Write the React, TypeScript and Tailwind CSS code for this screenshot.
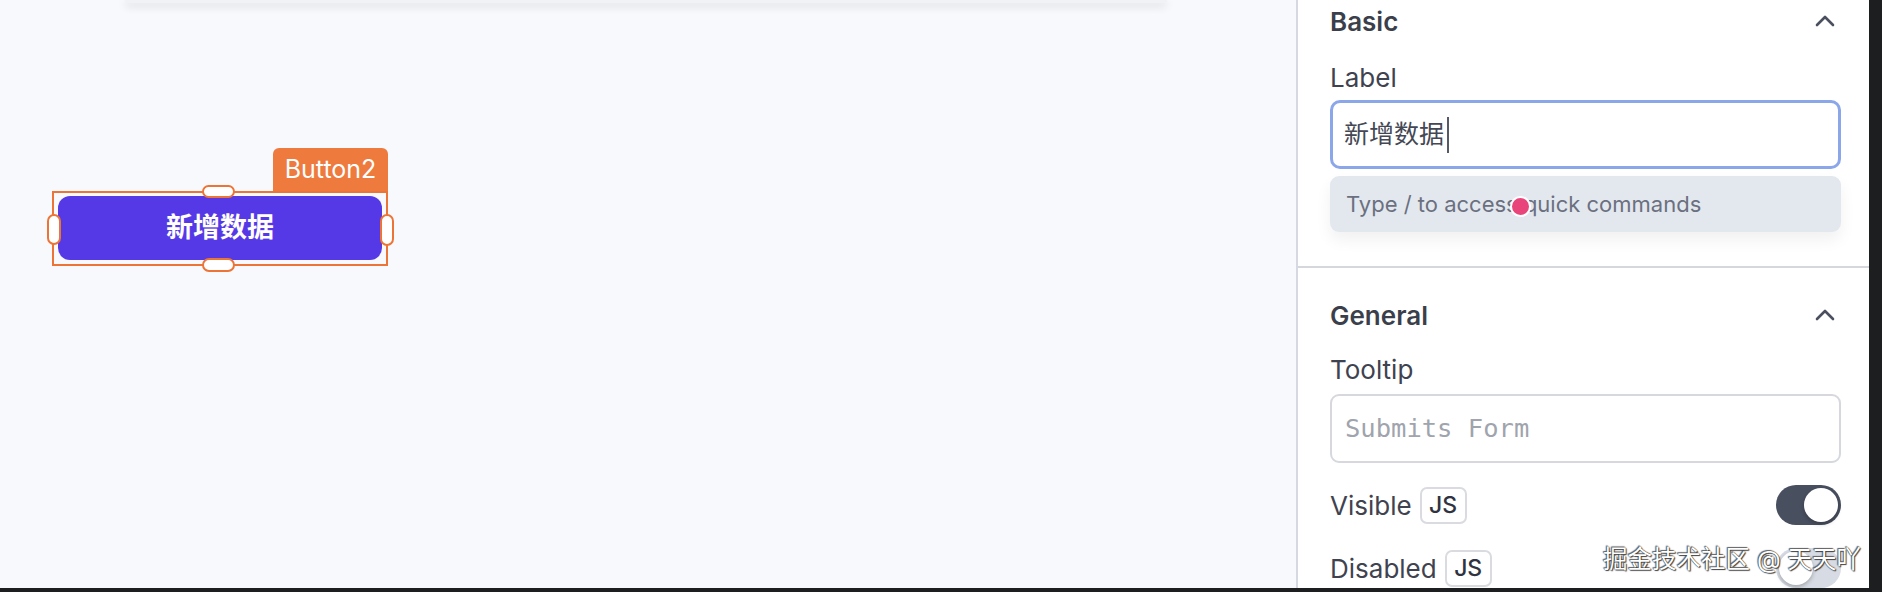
import React from "react";

function ChevronUp() {
  return (
    <svg width="20" height="12" viewBox="0 0 20 12" fill="none">
      <polyline points="2,10 10,2 18,10" stroke="#4b5060" strokeWidth="2.6" strokeLinecap="round" strokeLinejoin="round" />
    </svg>
  );
}

function JsBadge() {
  return (
    <span className="ml-[8px] flex h-[37px] w-[47px] items-center justify-center rounded-[7px] border-2 border-[#d9dbe0] text-[23px] font-medium text-[#2f3340]">
      JS
    </span>
  );
}

function Toggle({ on }: { on: boolean }) {
  return (
    <div
      className={
        on
          ? "flex h-[40px] w-[65px] items-center justify-end rounded-full bg-[#484f5f] px-[3px]"
          : "flex h-[40px] w-[65px] items-center justify-start rounded-full bg-[#d7dbe3] px-[3px]"
      }
    >
      <div className="h-[34px] w-[34px] rounded-full bg-white shadow-[0_2px_4px_rgba(0,0,0,0.25)]" />
    </div>
  );
}

function SectionHeader({ title }: { title: string }) {
  return (
    <div className="flex h-[42px] items-center justify-between pr-[6px]">
      <span className="text-[26px] font-semibold text-[#3b3f4b]">{title}</span>
      <ChevronUp />
    </div>
  );
}

function Canvas() {
  return (
    <div className="relative flex h-full w-[1296px] flex-col bg-[#f8f9fc]">
      <div className="ml-[125px] h-[3px] w-[1042px] rounded-b-[4px] bg-[#f1f2f5] shadow-[0_3px_8px_rgba(0,0,0,0.18)]" />

      {/* selected widget on the canvas */}
      <div className="absolute left-[52px] top-[148px] w-[336px]">
        <div className="flex justify-end">
          <div className="flex h-[43px] w-[115px] items-center justify-center rounded-t-[6px] bg-[#ee7a3d] text-[25px] text-white">
            Button2
          </div>
        </div>
        <div className="relative h-[75px] border-2 border-[#ec7436] px-[4px] pt-[3px]">
          <button className="flex h-[64px] w-full items-center justify-center rounded-[12px] bg-[#5639e6] text-[27px] font-bold text-white">
            新增数据
          </button>
          <span className="absolute left-[148px] top-[-8px] h-[13px] w-[33px] rounded-full border-2 border-[#ec7436] bg-white" />
          <span className="absolute bottom-[-8px] left-[148px] h-[14px] w-[33px] rounded-full border-2 border-[#ec7436] bg-white" />
          <span className="absolute left-[-7px] top-[21px] h-[31px] w-[14px] rounded-full border-2 border-[#ec7436] bg-white" />
          <span className="absolute right-[-8px] top-[21px] h-[32px] w-[14px] rounded-full border-2 border-[#ec7436] bg-white" />
        </div>
      </div>
    </div>
  );
}

function Inspector() {
  return (
    <div className="relative h-full w-[573px] overflow-hidden border-l-2 border-[#d6d8e2] bg-white">
      <div className="pb-[34px] pl-[32px] pr-[28px]">
        <SectionHeader title="Basic" />
        <div className="mt-[18px] text-[26px] leading-[36px] text-[#3f4350]">Label</div>
        <div className="mt-[4px] flex h-[69px] items-center rounded-[10px] border-[3px] border-[#8ba7ea] pl-[11px]">
          <span className="text-[25px] text-[#444854]">新增数据</span>
          <span className="ml-[3px] h-[36px] w-[2px] bg-[#555a66]" />
        </div>
        <div className="relative mt-[7px] flex h-[56px] items-center rounded-[9px] bg-[#e3e8ef] pl-[16px] shadow-[0_8px_16px_rgba(0,0,0,0.06)]">
          <span className="text-[22px] text-[#6b7080]">Type / to access quick commands</span>
          <span className="absolute left-[180px] top-[20px] h-[21px] w-[21px] rounded-full border-2 border-white bg-[#e8457a]" />
        </div>
      </div>

      <div className="h-[2px] bg-[#d6d7dc]" />

      <div className="pl-[32px] pr-[28px] pt-[26px]">
        <SectionHeader title="General" />
        <div className="mt-[16px] text-[26px] leading-[36px] text-[#3f4350]">Tooltip</div>
        <div className="mt-[6px] flex h-[69px] items-center rounded-[9px] border-2 border-[#d6d8dd] pl-[13px]">
          <span className="font-['DejaVu_Sans_Mono',monospace] text-[25.5px] text-[#a0a4ad]">Submits Form</span>
        </div>
        <div className="mt-[21px] flex h-[42px] items-center justify-between">
          <div className="flex items-center">
            <span className="text-[26px] text-[#3f4350]">Visible</span>
            <JsBadge />
          </div>
          <Toggle on />
        </div>
        <div className="mt-[21px] flex h-[42px] items-center justify-between">
          <div className="flex items-center">
            <span className="text-[26px] text-[#3f4350]">Disabled</span>
            <JsBadge />
          </div>
          <Toggle on={false} />
        </div>
      </div>

      <div className="absolute left-[305px] top-[541px] text-[24.5px] text-white [text-shadow:0_0_1px_#222,1px_1px_1px_#444,-1px_-1px_1px_#666]">
        掘金技术社区 @ 天天吖
      </div>
    </div>
  );
}

export default function App() {
  return (
    <div className="flex h-[592px] w-[1882px] flex-col overflow-hidden font-['Inter','Noto_Sans_CJK_SC',sans-serif]">
      <div className="flex h-[588px]">
        <Canvas />
        <Inspector />
        <div className="h-full w-[13px] bg-[#1d1e20]" />
      </div>
      <div className="h-[4px] bg-[#1d1e20]" />
    </div>
  );
}
